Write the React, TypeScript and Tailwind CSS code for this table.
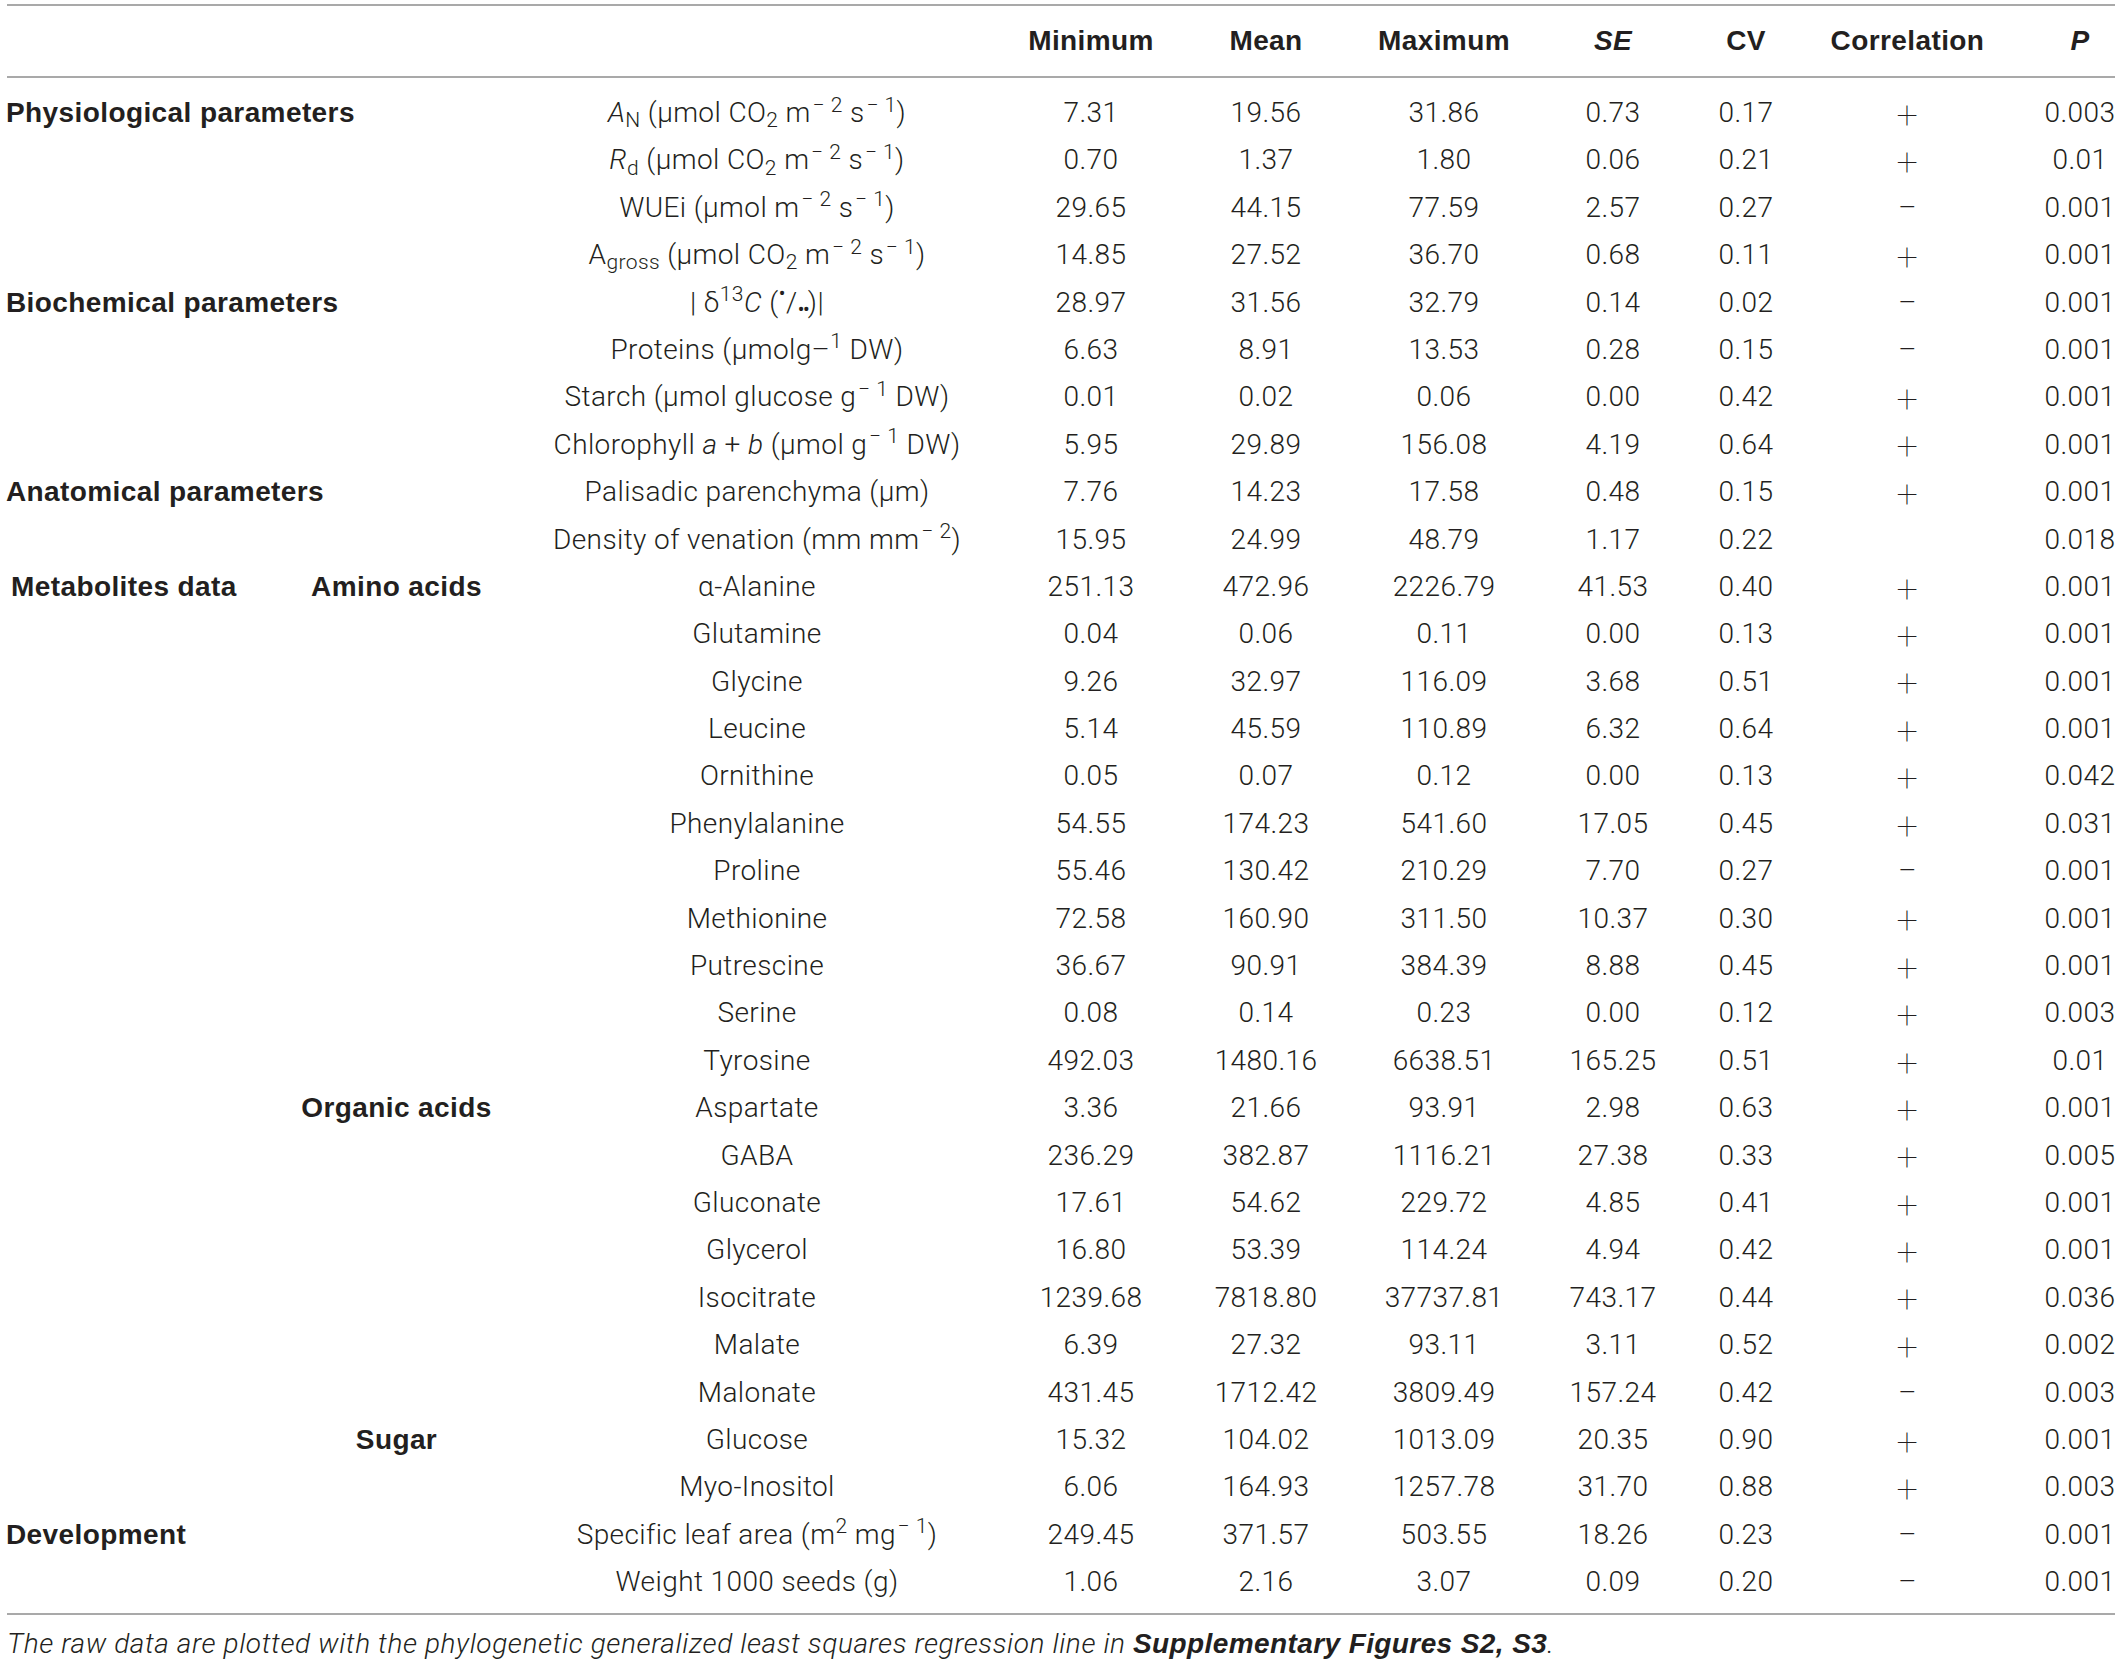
import React from "react";

type Row = {
  cat?: string;
  catIndent?: boolean;
  sub?: string;
  param: React.ReactNode;
  v: [string, string, string, string, string];
  c: "+" | "-" | "";
  p: string;
};

const S = ({ children }: { children: React.ReactNode }) => (
  <sup className="ml-[2px]">{children}</sup>
);

const rows: Row[] = [
  {
    cat: "Physiological parameters",
    param: (
      <>
        <i>A</i>
        <sub>N</sub> (µmol CO<sub>2</sub> m<S>− 2</S> s<S>− 1</S>)
      </>
    ),
    v: ["7.31", "19.56", "31.86", "0.73", "0.17"],
    c: "+",
    p: "0.003",
  },
  {
    param: (
      <>
        <i>R</i>
        <sub>d</sub> (µmol CO<sub>2</sub> m<S>− 2</S> s<S>− 1</S>)
      </>
    ),
    v: ["0.70", "1.37", "1.80", "0.06", "0.21"],
    c: "+",
    p: "0.01",
  },
  {
    param: (
      <>
        WUEi (µmol m<S>− 2</S> s<S>− 1</S>)
      </>
    ),
    v: ["29.65", "44.15", "77.59", "2.57", "0.27"],
    c: "-",
    p: "0.001",
  },
  {
    param: (
      <>
        A<sub>gross</sub> (µmol CO<sub>2</sub> m<S>− 2</S> s<S>− 1</S>)
      </>
    ),
    v: ["14.85", "27.52", "36.70", "0.68", "0.11"],
    c: "+",
    p: "0.001",
  },
  {
    cat: "Biochemical parameters",
    param: (
      <>
        | δ<sup>13</sup>
        <i>C</i> (<sup className="text-[22px]">•</sup>/<sub className="text-[22px] tracking-[-2px]">••</sub>)|
      </>
    ),
    v: ["28.97", "31.56", "32.79", "0.14", "0.02"],
    c: "-",
    p: "0.001",
  },
  {
    param: (
      <>
        Proteins (µmolg–<sup>1</sup> DW)
      </>
    ),
    v: ["6.63", "8.91", "13.53", "0.28", "0.15"],
    c: "-",
    p: "0.001",
  },
  {
    param: (
      <>
        Starch (µmol glucose g<S>− 1</S> DW)
      </>
    ),
    v: ["0.01", "0.02", "0.06", "0.00", "0.42"],
    c: "+",
    p: "0.001",
  },
  {
    param: (
      <>
        Chlorophyll <i>a</i> + <i>b</i> (µmol g<S>− 1</S> DW)
      </>
    ),
    v: ["5.95", "29.89", "156.08", "4.19", "0.64"],
    c: "+",
    p: "0.001",
  },
  {
    cat: "Anatomical parameters",
    param: <>Palisadic parenchyma (µm)</>,
    v: ["7.76", "14.23", "17.58", "0.48", "0.15"],
    c: "+",
    p: "0.001",
  },
  {
    param: (
      <>
        Density of venation (mm mm<S>− 2</S>)
      </>
    ),
    v: ["15.95", "24.99", "48.79", "1.17", "0.22"],
    c: "",
    p: "0.018",
  },
  {
    cat: "Metabolites data",
    catIndent: true,
    sub: "Amino acids",
    param: <>α-Alanine</>,
    v: ["251.13", "472.96", "2226.79", "41.53", "0.40"],
    c: "+",
    p: "0.001",
  },
  { param: <>Glutamine</>, v: ["0.04", "0.06", "0.11", "0.00", "0.13"], c: "+", p: "0.001" },
  { param: <>Glycine</>, v: ["9.26", "32.97", "116.09", "3.68", "0.51"], c: "+", p: "0.001" },
  { param: <>Leucine</>, v: ["5.14", "45.59", "110.89", "6.32", "0.64"], c: "+", p: "0.001" },
  { param: <>Ornithine</>, v: ["0.05", "0.07", "0.12", "0.00", "0.13"], c: "+", p: "0.042" },
  { param: <>Phenylalanine</>, v: ["54.55", "174.23", "541.60", "17.05", "0.45"], c: "+", p: "0.031" },
  { param: <>Proline</>, v: ["55.46", "130.42", "210.29", "7.70", "0.27"], c: "-", p: "0.001" },
  { param: <>Methionine</>, v: ["72.58", "160.90", "311.50", "10.37", "0.30"], c: "+", p: "0.001" },
  { param: <>Putrescine</>, v: ["36.67", "90.91", "384.39", "8.88", "0.45"], c: "+", p: "0.001" },
  { param: <>Serine</>, v: ["0.08", "0.14", "0.23", "0.00", "0.12"], c: "+", p: "0.003" },
  { param: <>Tyrosine</>, v: ["492.03", "1480.16", "6638.51", "165.25", "0.51"], c: "+", p: "0.01" },
  {
    sub: "Organic acids",
    param: <>Aspartate</>,
    v: ["3.36", "21.66", "93.91", "2.98", "0.63"],
    c: "+",
    p: "0.001",
  },
  { param: <>GABA</>, v: ["236.29", "382.87", "1116.21", "27.38", "0.33"], c: "+", p: "0.005" },
  { param: <>Gluconate</>, v: ["17.61", "54.62", "229.72", "4.85", "0.41"], c: "+", p: "0.001" },
  { param: <>Glycerol</>, v: ["16.80", "53.39", "114.24", "4.94", "0.42"], c: "+", p: "0.001" },
  { param: <>Isocitrate</>, v: ["1239.68", "7818.80", "37737.81", "743.17", "0.44"], c: "+", p: "0.036" },
  { param: <>Malate</>, v: ["6.39", "27.32", "93.11", "3.11", "0.52"], c: "+", p: "0.002" },
  { param: <>Malonate</>, v: ["431.45", "1712.42", "3809.49", "157.24", "0.42"], c: "-", p: "0.003" },
  {
    sub: "Sugar",
    param: <>Glucose</>,
    v: ["15.32", "104.02", "1013.09", "20.35", "0.90"],
    c: "+",
    p: "0.001",
  },
  { param: <>Myo-Inositol</>, v: ["6.06", "164.93", "1257.78", "31.70", "0.88"], c: "+", p: "0.003" },
  {
    cat: "Development",
    param: (
      <>
        Specific leaf area (m<sup>2</sup> mg<S>− 1</S>)
      </>
    ),
    v: ["249.45", "371.57", "503.55", "18.26", "0.23"],
    c: "-",
    p: "0.001",
  },
  {
    param: <>Weight 1000 seeds (g)</>,
    v: ["1.06", "2.16", "3.07", "0.09", "0.20"],
    c: "-",
    p: "0.001",
  },
];

const GRID =
  "grid grid-cols-[300px_193px_528px_140px_210px_146px_192px_74px_249px_96px] w-[2128px]";

const BOLD = "font-['Liberation_Sans',Arial,sans-serif] font-bold text-[28px] tracking-[0.4px]";
const LIGHT = "font-['Roboto','Liberation_Sans',sans-serif] font-light text-[28px] tracking-[0.4px]";

const C = ({ children, className = "" }: { children?: React.ReactNode; className?: string }) => (
  <div className={"flex items-center justify-center whitespace-nowrap " + className}>{children}</div>
);

export default function App() {
  return (
    <div className="w-[2122px] h-[1664px] overflow-hidden bg-white text-[#231f20]">
      <div className="pt-[4px]">
        <div className="mx-[7px] h-[2px] bg-[#a9a9a9]" />
        <div className={GRID + " h-[70px] " + BOLD}>
          <div />
          <div />
          <div />
          <C>Minimum</C>
          <C>Mean</C>
          <C>Maximum</C>
          <C>
            <i>SE</i>
          </C>
          <C>CV</C>
          <C>Correlation</C>
          <C>
            <i>P</i>
          </C>
        </div>
        <div className="mx-[7px] h-[2px] bg-[#a9a9a9]" />
        <div className="pt-[11px] pb-[7px]">
          {rows.map((r, i) => (
            <div key={i} className={GRID + " h-[47.4px] leading-[47.4px] " + LIGHT}>
              <div className={"flex items-center whitespace-nowrap " + BOLD + (r.catIndent ? " pl-[11px]" : " pl-[6px]")}>
                {r.cat ?? ""}
              </div>
              <C className={BOLD}>{r.sub ?? ""}</C>
              <C>
                <span>{r.param}</span>
              </C>
              {r.v.map((x, j) => (
                <C key={j}>{x}</C>
              ))}
              <C>
                {r.c === "+" ? (
                  <span className="text-[38px] font-thin leading-none translate-y-[2px]">+</span>
                ) : r.c === "-" ? (
                  <span>–</span>
                ) : null}
              </C>
              <C>{r.p}</C>
            </div>
          ))}
        </div>
        <div className="mx-[7px] h-[2px] bg-[#a9a9a9]" />
        <p className={"mt-[14px] pl-[7px] leading-[30px] italic whitespace-nowrap font-['Roboto','Liberation_Sans',sans-serif] font-light text-[28px] tracking-[0.6px]"}>
          The raw data are plotted with the phylogenetic generalized least squares regression line in{" "}
          <span className="font-bold tracking-[0.4px] font-['Liberation_Sans',Arial,sans-serif]">
            Supplementary Figures S2, S3
          </span>
          .
        </p>
      </div>
    </div>
  );
}
